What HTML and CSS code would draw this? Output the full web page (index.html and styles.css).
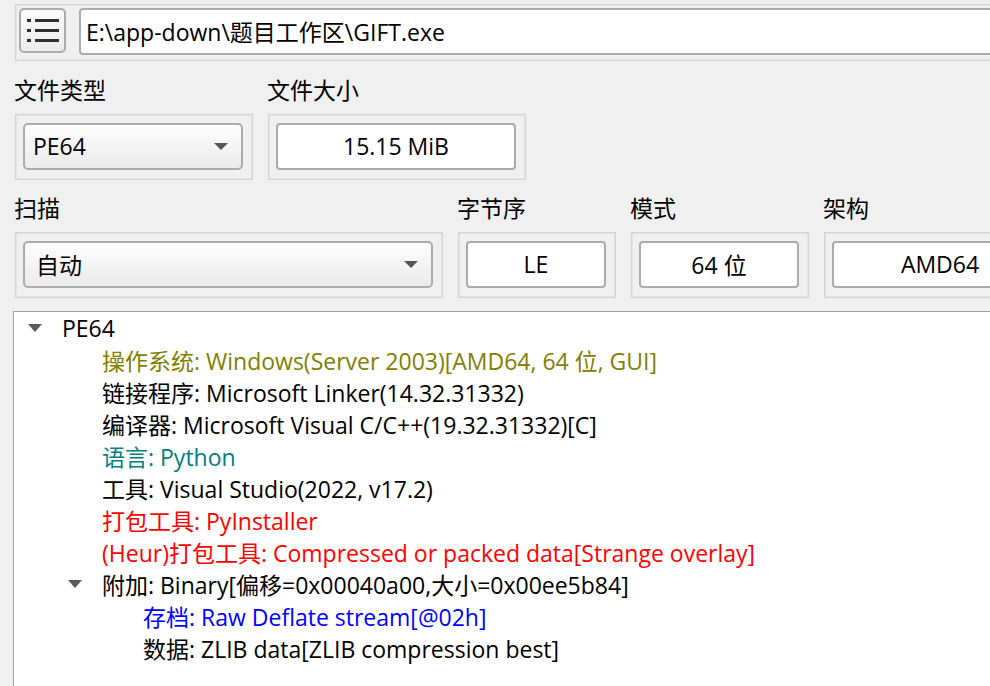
FILE: index.html
```html
<!DOCTYPE html>
<html lang="zh-CN">
<head>
<meta charset="utf-8">
<title>Detect It Easy</title>
<link rel="stylesheet" href="styles.css">
</head>
<body>
<div class="app">
  <div class="frame pathbar">
    <button class="menu-btn" type="button" aria-label="菜单">
      <svg width="32" height="23" viewBox="0 0 32 23">
        <rect x="0" y="0" width="4" height="3" fill="#2f2f2f"/>
        <rect x="8" y="0" width="24" height="3" fill="#2f2f2f"/>
        <rect x="0" y="10" width="4" height="3" fill="#2f2f2f"/>
        <rect x="8" y="10" width="24" height="3" fill="#2f2f2f"/>
        <rect x="0" y="20" width="4" height="3" fill="#2f2f2f"/>
        <rect x="8" y="20" width="24" height="3" fill="#2f2f2f"/>
      </svg>
    </button>
    <div class="field path">E:\app-down\题目工作区\GIFT.exe</div>
  </div>

  <div class="row row-info">
    <div class="col col-type">
      <div class="label">文件类型</div>
      <div class="frame box">
        <div class="combo"><span>PE64</span><i class="caret"></i></div>
      </div>
    </div>
    <div class="col col-size">
      <div class="label">文件大小</div>
      <div class="frame box">
        <div class="field value">15.15 MiB</div>
      </div>
    </div>
  </div>

  <div class="row row-scan">
    <div class="col col-scan">
      <div class="label">扫描</div>
      <div class="frame box">
        <div class="combo"><span class="combo-cjk">自动</span><i class="caret"></i></div>
      </div>
    </div>
    <div class="col col-endian">
      <div class="label">字节序</div>
      <div class="frame box">
        <div class="field value">LE</div>
      </div>
    </div>
    <div class="col col-mode">
      <div class="label">模式</div>
      <div class="frame box">
        <div class="field value">64 位</div>
      </div>
    </div>
    <div class="col col-arch">
      <div class="label">架构</div>
      <div class="frame box">
        <div class="field value">AMD64</div>
      </div>
    </div>
  </div>

  <div class="tree">
    <div class="node l0"><span class="twisty"><i class="tri"></i></span><span>PE64</span></div>
    <div class="node l1"><span class="twisty"></span><span class="c-olive">操作系统: Windows(Server 2003)[AMD64, 64 位, GUI]</span></div>
    <div class="node l1"><span class="twisty"></span><span>链接程序: Microsoft Linker(14.32.31332)</span></div>
    <div class="node l1"><span class="twisty"></span><span>编译器: Microsoft Visual C/C++(19.32.31332)[C]</span></div>
    <div class="node l1"><span class="twisty"></span><span class="c-teal">语言: Python</span></div>
    <div class="node l1"><span class="twisty"></span><span>工具: Visual Studio(2022, v17.2)</span></div>
    <div class="node l1"><span class="twisty"></span><span class="c-red">打包工具: PyInstaller</span></div>
    <div class="node l1"><span class="twisty"></span><span class="c-red">(Heur)打包工具: Compressed or packed data[Strange overlay]</span></div>
    <div class="node l1"><span class="twisty"><i class="tri"></i></span><span>附加: Binary[偏移=0x00040a00,大小=0x00ee5b84]</span></div>
    <div class="node l2"><span class="twisty"></span><span class="c-blue">存档: Raw Deflate stream[@02h]</span></div>
    <div class="node l2"><span class="twisty"></span><span>数据: ZLIB data[ZLIB compression best]</span></div>
  </div>
</div>
</body>
</html>
```

FILE: styles.css
```css
html, body {
  margin: 0;
  padding: 0;
  overflow: hidden;
}

body {
  background: #f0f0f0;
  font-family: "Open Sans", "Noto Sans CJK SC", sans-serif;
  font-size: 23px;
  font-weight: 400;
  color: #000;
}

.app {
  width: 1100px;
  height: 686px;
  box-sizing: border-box;
  padding: 4px 0 0 15px;
  display: flex;
  flex-direction: column;
}

.frame {
  border: 1px solid #d4d4d4;
  box-shadow: inset 0 0 0 1px #e4e4e4;
  box-sizing: border-box;
}

/* path bar */
.pathbar {
  display: flex;
  align-items: flex-start;
  gap: 13px;
  height: 57px;
  padding: 3px;
}

.menu-btn {
  width: 47px;
  height: 45px;
  flex: none;
  box-sizing: border-box;
  border: 2px solid #ababab;
  border-radius: 5px;
  background: linear-gradient(#fbfbfb, #ececec);
  display: flex;
  align-items: center;
  justify-content: center;
  padding: 0;
  margin: 0;
}

.menu-btn svg {
  display: block;
}

.field {
  background: #fff;
  border: 2px solid #ababab;
  border-radius: 4px;
  box-sizing: border-box;
  display: flex;
  align-items: center;
}

.path {
  flex: 1;
  height: 47px;
  padding: 0 5px 2px;
}

/* label + box rows */
.row {
  display: flex;
  gap: 15px;
}

.row-info {
  margin-top: 16px;
}

.row-scan {
  margin-top: 15px;
}

.label {
  height: 30px;
  line-height: 26px;
  margin: 0 0 7px -1px;
}

.box {
  padding: 8px 9px 9px 7px;
}

.col-type { width: 238px; }
.col-size { width: 258px; }
.col-scan { width: 428px; }
.col-endian { width: 158px; }
.col-mode { width: 178px; }
.col-arch { width: 234px; }

.combo {
  height: 47px;
  box-sizing: border-box;
  border: 2px solid #ababab;
  border-radius: 5px;
  background: linear-gradient(#fdfdfd, #ebebeb);
  display: flex;
  align-items: center;
  justify-content: space-between;
  padding: 0 13px 2px 8px;
}

.combo-cjk {
  padding-left: 3px;
}

.caret {
  width: 0;
  height: 0;
  border-left: 7px solid transparent;
  border-right: 7px solid transparent;
  border-top: 7px solid #555;
  margin-top: 2px;
}

.value {
  height: 47px;
  justify-content: center;
  padding-bottom: 2px;
}

/* tree */
.tree {
  flex: 1;
  margin: 13px 0 0 -2px;
  background: #fff;
  border-top: 1px solid #a3a3a3;
  border-left: 1px solid #a3a3a3;
  padding-top: 0;
}

.node {
  display: flex;
  align-items: center;
  height: 32px;
  white-space: nowrap;
}

.l0 { padding-left: 0; }
.l1 { padding-left: 40px; }
.l2 { padding-left: 81px; }

.twisty {
  width: 48px;
  flex: none;
  display: flex;
  align-items: center;
}

.tri {
  width: 0;
  height: 0;
  margin-left: 14px;
  border-left: 7px solid transparent;
  border-right: 7px solid transparent;
  border-top: 8px solid #5a5a5a;
}

.c-olive { color: #808000; }
.c-teal { color: #008080; }
.c-red { color: #ff0000; }
.c-blue { color: #0000ff; }
```
